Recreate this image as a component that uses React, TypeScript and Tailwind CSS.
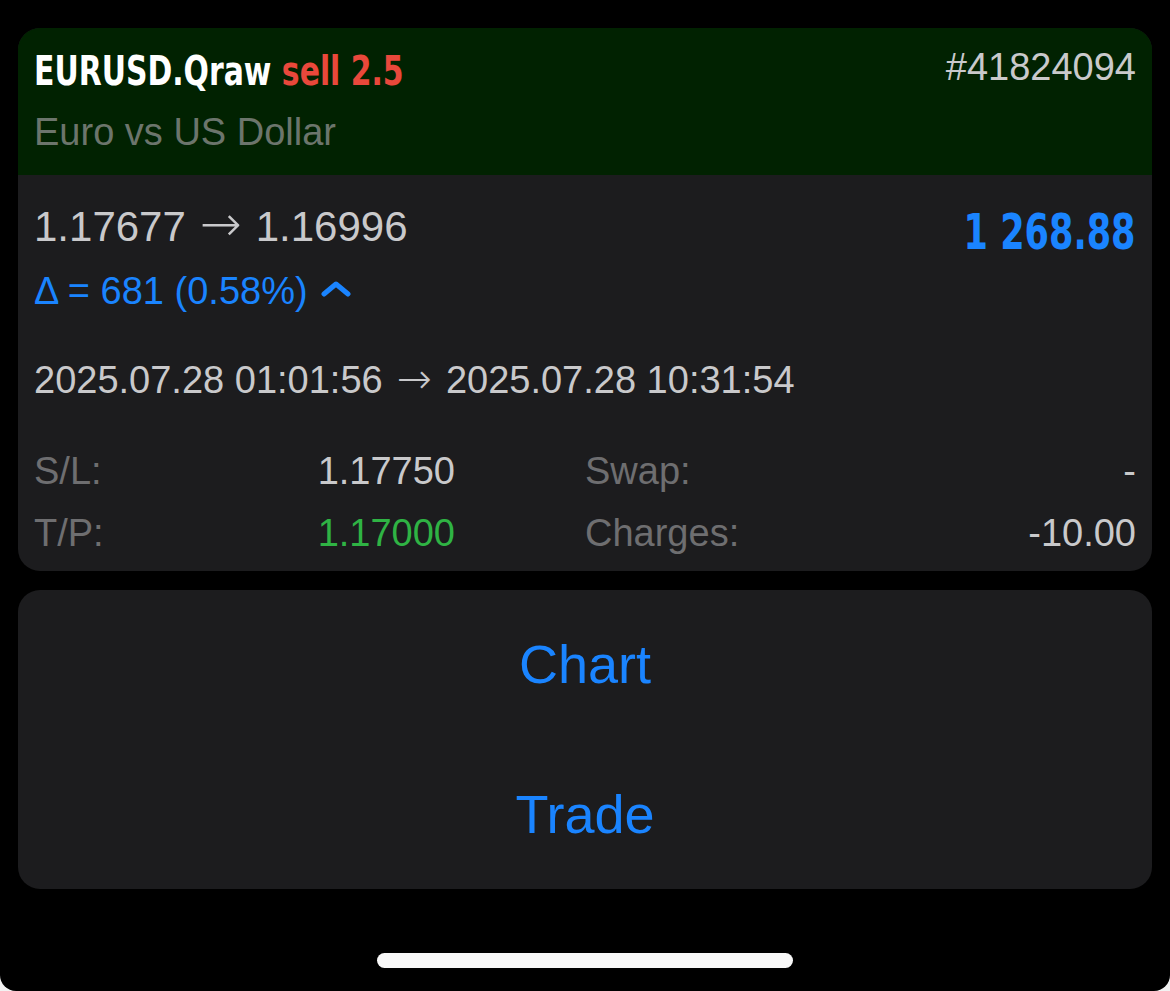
import React from 'react';

const sans = 'font-["Liberation_Sans","Helvetica",sans-serif]';
const narrow = 'font-["Liberation_Sans_Narrow","DejaVu_Sans_Condensed",sans-serif]';
const arrow = 'font-["DejaVu_Sans_ExtraLight","DejaVu_Sans",sans-serif] font-extralight';

function Row({ label, value, valueClass }: { label: string; value: string; valueClass?: string }) {
  return (
    <div className="flex justify-between">
      <span className="text-[#6e6e70]">{label}</span>
      <span className={valueClass ?? 'text-[#c9c9cb]'}>{value}</span>
    </div>
  );
}

export default function App() {
  return (
    <div className={`min-h-screen bg-[#f2f2f2] ${sans}`}>
      <div className="h-[991px] bg-black rounded-b-[16px] px-[18px] pt-[28px] flex flex-col">
        {/* position card */}
        <div className="rounded-[22px] overflow-hidden bg-[#1c1c1e]">
          <div className="h-[147px] bg-[#012201] px-[16px] pt-[19px] flex justify-between">
            <div>
              <div className={`${narrow} font-bold text-[40px] leading-[48px] whitespace-nowrap`}>
                <span className="inline-block origin-left scale-x-[0.83]">
                  <span className="text-white">EURUSD.Qraw</span>{' '}
                  <span className="text-[#e9483b]">sell 2.5</span>
                </span>
              </div>
              <div className="mt-[15px] text-[38px] leading-[44px] text-[#6c756c]">Euro vs US Dollar</div>
            </div>
            <div className="-mt-[2px] text-[38px] leading-[44px] text-[#c9c9cb]">#41824094</div>
          </div>

          <div className="px-[16px] pt-[25px] pb-[7px]">
            <div className="flex justify-between items-start">
              <div className="h-[48px] text-[42px] leading-[48px] text-[#c9c9cb] whitespace-nowrap">
                1.17677<span className={`${arrow} text-[50px] mx-[14px] leading-[48px]`}>→</span>1.16996
              </div>
              <div className={`${narrow} mt-[4px] font-bold text-[50px] leading-[56px] text-[#1a84ff]`}>
                <span className="inline-block origin-right scale-x-[0.78]">1 268.88</span>
              </div>
            </div>
            <div className="mt-[9px] flex items-center text-[38px] leading-[44px] text-[#1a84ff] whitespace-nowrap">
              <span>Δ = 681 (0.58%)</span>
              <svg className="ml-[13px] -mt-[4px]" width="30" height="16" viewBox="0 0 30 16" fill="none">
                <polyline points="3,13 15,3 27,13" stroke="#1a84ff" strokeWidth="5" strokeLinecap="round" strokeLinejoin="round" />
              </svg>
            </div>
            <div className="mt-[44px] h-[44px] text-[38px] leading-[44px] text-[#c9c9cb] whitespace-nowrap">
              2025.07.28 01:01:56<span className={`${arrow} text-[42px] mx-[14px] leading-[44px]`}>→</span>2025.07.28 10:31:54
            </div>
            <div className="mt-[39px] flex text-[38px] leading-[62px]">
              <div className="w-[421px]">
                <Row label="S/L:" value="1.17750" />
                <Row label="T/P:" value="1.17000" valueClass="text-[#2fb344]" />
              </div>
              <div className="ml-[130px] flex-1">
                <Row label="Swap:" value="-" />
                <Row label="Charges:" value="-10.00" />
              </div>
            </div>
          </div>
        </div>

        {/* actions */}
        <div className="mt-[19px] h-[299px] rounded-[22px] bg-[#1c1c1e] flex flex-col text-[54px] text-[#1a84ff]">
          <button className="flex-1 flex items-center justify-center">Chart</button>
          <button className="flex-1 flex items-center justify-center">Trade</button>
        </div>

        <div className="mt-[64px] mx-auto w-[416px] h-[15px] rounded-full bg-[#f8f8f8]" />
      </div>
    </div>
  );
}
